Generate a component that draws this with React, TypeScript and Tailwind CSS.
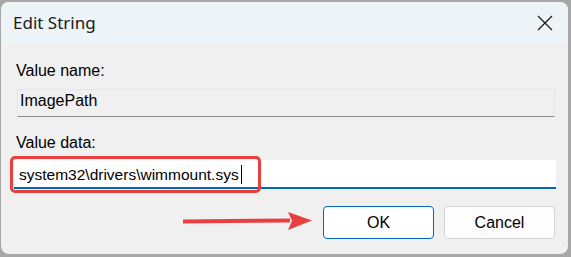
import React from 'react';

const body = { fontFamily: '"Liberation Sans", Arial, sans-serif' };
const title = { fontFamily: '"Noto Sans", "Open Sans", sans-serif' };

function CloseIcon() {
  return (
    <svg width="16" height="16" viewBox="0 0 16 16" className="text-[#1b1b1b]">
      <path d="M1 1 L15 15 M15 1 L1 15" stroke="currentColor" strokeWidth="1.3" fill="none" />
    </svg>
  );
}

export default function App() {
  return (
    <div className="relative w-[571px] h-[257px] overflow-hidden bg-[#a7a7a7]" style={body}>
      {/* Dialog */}
      <div className="ml-[1px] mt-[2px] w-[567px] h-[252px] rounded-[8px] overflow-hidden bg-[#f0f0f0] flex flex-col">
        {/* Title bar */}
        <div className="h-[42px] bg-[#ecf4f8] flex items-center justify-between pl-[12px] pr-[15px]">
          <span className="text-[17px] text-[#1a1a1a] leading-none pb-[2px]" style={title}>Edit String</span>
          <CloseIcon />
        </div>

        {/* Body */}
        <div className="flex flex-col pl-[15px] pr-[12px]">
          <label className="mt-[18px] text-[16px] leading-[18px] text-black">Value name:</label>
          <div className="mt-[9px] ml-[1px] w-[538px] h-[28px] bg-[#f0f0f0] border border-[#e6e6e6] border-b-[#8a8a8a] pl-[2px] pt-[2px] text-[16px] leading-[18px] text-black">
            ImagePath
          </div>

          <label className="mt-[17px] text-[16px] leading-[18px] text-black">Value data:</label>
          <div className="mt-[8px] -ml-[2px] w-[542px] h-[29px] bg-white border-b-2 border-[#0067c0] pl-[5px] pt-[6px] flex items-start">
            <span className="text-[15.5px] leading-[18px] text-black">system32\drivers\wimmount.sys</span>
            <span className="ml-[2px] mt-[-1px] w-[1px] h-[19px] bg-black" />
          </div>

          <div className="mt-[17px] flex justify-end gap-[10px] pr-[1px]">
            <button className="w-[111px] h-[33px] rounded-[4px] bg-white border border-[#0067c0] text-[16px] text-black">
              OK
            </button>
            <button className="w-[111px] h-[33px] rounded-[4px] bg-[#fdfdfd] border border-[#d3d3d3] text-[16px] text-black">
              Cancel
            </button>
          </div>
        </div>
      </div>

      {/* Annotation: red highlight box */}
      <div className="absolute left-[10px] top-[156px] w-[251px] h-[37px] rounded-[5px] border-[3.5px] border-[#e8403f]" />

      {/* Annotation: red arrow */}
      <svg className="absolute left-[180px] top-[208px]" width="136" height="26" viewBox="0 0 136 26">
        <path d="M3 13.5 L110 12.5" stroke="#e8403f" strokeWidth="4" fill="none" />
        <path d="M108 4 L132 12.5 L108 22 L112 12.8 Z" fill="#e8403f" />
      </svg>
    </div>
  );
}
